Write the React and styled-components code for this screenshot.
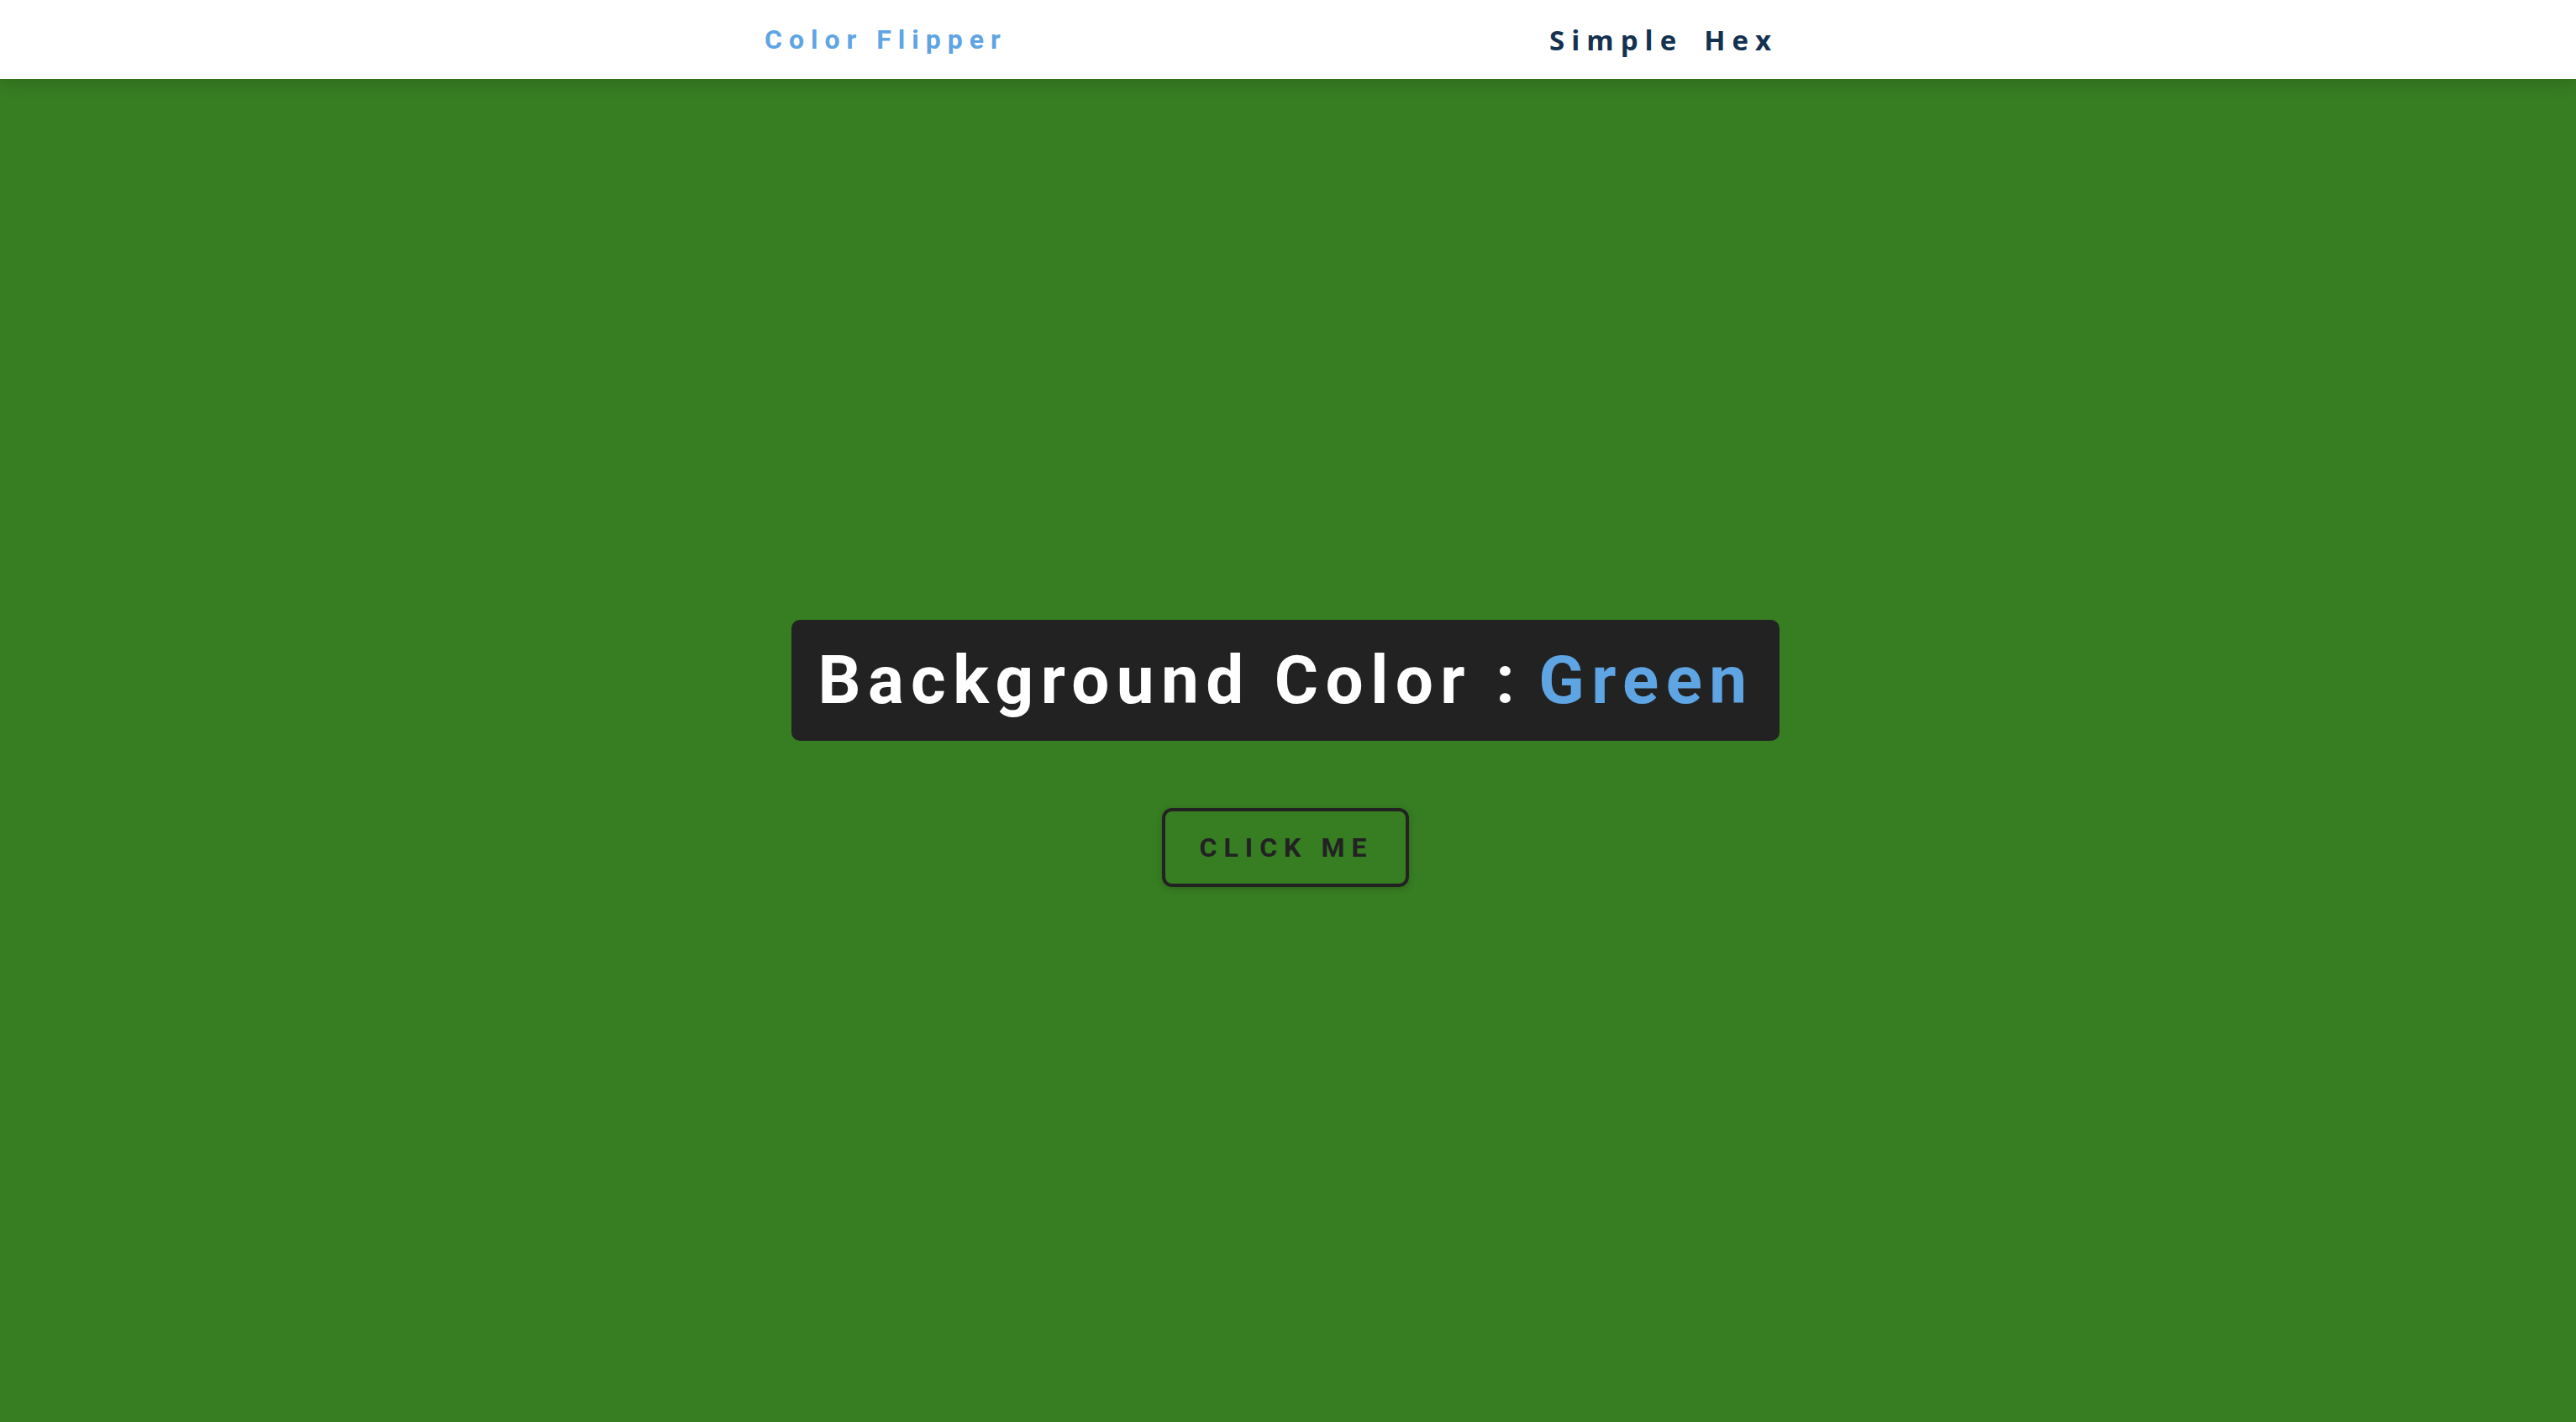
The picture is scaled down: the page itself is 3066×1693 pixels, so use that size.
import React from "react";
import styled, { createGlobalStyle } from "styled-components";

const Global = createGlobalStyle`
  * { box-sizing: border-box; margin: 0; padding: 0; }
  html, body { height: 100%; }
  body { background: #377d22; font-family: Roboto, "Open Sans", sans-serif; }
  #root { min-height: 100vh; display: flex; flex-direction: column; }
`;

const Nav = styled.nav`
  height: 94px;
  background: #fff;
  box-shadow: 0 6px 18px rgba(0, 0, 0, 0.14);
  display: flex;
  align-items: center;
  position: relative;
  z-index: 1;
`;

const NavCenter = styled.div`
  width: 1246px;
  margin: 0 auto;
  display: flex;
  align-items: center;
  justify-content: space-between;
`;

const Brand = styled.h4`
  font-family: Roboto, sans-serif;
  font-weight: 700;
  font-size: 32px;
  letter-spacing: 8px;
  color: #5fa5e3;
`;

const Links = styled.ul`
  list-style: none;
  display: flex;
  gap: 25px;
  margin-right: 40px;
`;

const LinkItem = styled.li`
  font-family: "Open Sans", sans-serif;
  font-weight: 700;
  font-size: 33px;
  letter-spacing: 8px;
  color: #14324f;
`;

const Main = styled.main`
  flex: 1;
  display: flex;
  flex-direction: column;
  align-items: center;
  justify-content: center;
  gap: 80px;
  padding: 6px 6px 0 0;
`;

const Banner = styled.h2`
  background: #222;
  border-radius: 10px;
  padding: 0 30px 0 31px;
  height: 144px;
  display: flex;
  align-items: center;
  font-family: Roboto, sans-serif;
  font-weight: 700;
  font-size: 80px;
  letter-spacing: 8.4px;
  color: #fff;
`;

const ColorName = styled.span`
  color: #5fa5e3;
  margin-left: 0.25em;
`;

const Button = styled.button`
  width: 294px;
  height: 94px;
  background: transparent;
  border: 4px solid #222;
  border-radius: 12px;
  box-shadow: 0 2px 8px rgba(0, 0, 0, 0.18);
  font-family: Roboto, sans-serif;
  font-weight: 700;
  font-size: 32px;
  letter-spacing: 8px;
  text-transform: uppercase;
  color: #222;
  cursor: pointer;
  padding-left: 2px;
`;

export default function App() {
  return (
    <>
      <Global />
      <Nav>
        <NavCenter>
          <Brand>Color Flipper</Brand>
          <Links>
            <LinkItem>Simple</LinkItem>
            <LinkItem>Hex</LinkItem>
          </Links>
        </NavCenter>
      </Nav>
      <Main>
        <Banner>
          Background Color :<ColorName>Green</ColorName>
        </Banner>
        <Button>click me</Button>
      </Main>
    </>
  );
}
